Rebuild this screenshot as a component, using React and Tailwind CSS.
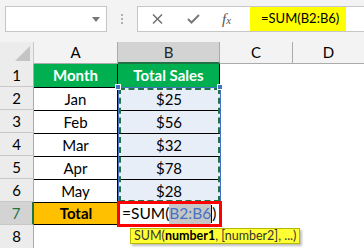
import React from "react";

const rows = [
  ["Jan", "$25"],
  ["Feb", "$56"],
  ["Mar", "$32"],
  ["Apr", "$78"],
  ["May", "$28"],
];

export default function App() {
  return (
    <div className="relative w-[364px] h-[249px] overflow-hidden bg-white" style={{ fontFamily: "Lato, 'Liberation Sans', sans-serif" }}>
      {/* formula bar area */}
      <div className="h-[42px] bg-[#f3f3f3] flex items-start pt-[6px] pl-[5px]">
        <div className="w-[102px] h-[26px] bg-white border border-[#c6c6c6] flex items-center justify-end pr-[6px]">
          <svg width="8" height="5" viewBox="0 0 8 5"><path d="M0 0H8L4 5Z" fill="#777" /></svg>
        </div>
        <div className="w-[30px] h-[26px] flex flex-col items-center justify-center gap-[2px]">
          <div className="w-[2px] h-[2px] bg-[#b0b0b0]" />
          <div className="w-[2px] h-[2px] bg-[#b0b0b0]" />
          <div className="w-[2px] h-[2px] bg-[#b0b0b0]" />
        </div>
        <div className="flex-1 h-[26px] bg-white border border-[#c6c6c6] border-r-0 flex items-stretch">
          <div className="w-[112px] flex items-center">
            <svg className="ml-[14px]" width="11" height="10" viewBox="0 0 11 10"><path d="M1 0.5L10 9.5M10 0.5L1 9.5" stroke="#6a6a6a" strokeWidth="1.4" /></svg>
            <svg className="ml-[24px]" width="13" height="10" viewBox="0 0 13 10"><path d="M1 5L4.5 8.5L12 1" stroke="#7a7a7a" strokeWidth="2" fill="none" /></svg>
            <span className="ml-[22px] text-[15px] italic text-[#555]" style={{ fontFamily: "'Liberation Serif', serif" }}>f<span className="text-[11px]">x</span></span>
          </div>
          <div className="w-[96px] bg-[#ffff00] flex items-center pl-[11px] text-[13px] text-black">=SUM(B2:B6)</div>
        </div>
      </div>

      {/* grid */}
      <div className="grid grid-cols-[34px_84px_102px_73px_71px] grid-rows-[22px_repeat(8,23px)] text-[15px]">
        {/* header row */}
        <div className="relative bg-[#ececec] border-r border-[#c8c8c8]">
          <svg className="absolute right-[3px] bottom-[3px]" width="15" height="15" viewBox="0 0 15 15"><path d="M15 0V15H0Z" fill="#c4c4c4" /></svg>
        </div>
        <div className="bg-[#f3f3f3] border-r border-[#ababab] border-b border-b-[#ababab] flex items-center justify-center text-black">A</div>
        <div className="bg-[#d3d3d3] border-r border-[#ababab] border-b-2 border-b-[#217346] flex items-center justify-center text-[#262626]">B</div>
        <div className="bg-[#f3f3f3] border-r border-[#ababab] border-b border-b-[#ababab] flex items-center justify-center text-black">C</div>
        <div className="bg-[#f3f3f3] border-b border-b-[#ababab] flex items-center justify-center text-black">D</div>

        {/* row 1 */}
        <div className="bg-[#ececec] border-r border-[#ababab] border-b border-b-[#c8c8c8] flex items-center justify-center">1</div>
        <div className="bg-[#00b050] border-r border-black flex items-center justify-center font-bold text-white">Month</div>
        <div className="bg-[#00b050] border-r border-black flex items-center justify-center font-bold text-white">Total Sales</div>
        <div />
        <div />

        {rows.map(([m, v], i) => (
          <React.Fragment key={m}>
            <div className="bg-[#ececec] border-r border-[#ababab] border-b border-b-[#c8c8c8] flex items-center justify-center">{i + 2}</div>
            <div className="border-t border-black border-r flex items-center justify-center text-black">{m}</div>
            <div className="bg-[#e8eef8] border-t border-black flex items-center justify-center text-black">{v}</div>
            <div />
            <div />
          </React.Fragment>
        ))}

        {/* row 7 */}
        <div className="bg-[#d3d3d3] border-r-2 border-[#217346] border-b border-b-[#c8c8c8] flex items-center justify-center text-[#217346]">7</div>
        <div className="bg-[#ffc000] border-t border-b border-black flex items-center justify-center font-bold text-black">Total</div>
        <div />
        <div />
        <div />

        {/* row 8 */}
        <div className="bg-[#ececec] border-r border-[#ababab] flex items-center justify-center">8</div>
        <div />
        <div />
        <div />
        <div />
      </div>

      {/* selection of B2:B6 */}
      <div className="absolute left-[118px] top-[87px] w-[103px] h-[116px] border border-[#4472c4]">
        <div className="absolute inset-0 border-2 border-dashed border-[#217346]" />
      </div>
      <div className="absolute left-[115px] top-[84px] w-[6px] h-[6px] bg-[#4472c4] border border-white" />
      <div className="absolute left-[217px] top-[84px] w-[6px] h-[6px] bg-[#4472c4] border border-white" />

      {/* active cell B7 */}
      <div className="absolute left-[117px] top-[201px] w-[105px] h-[26px] border-[3px] border-[#ff0000] bg-white flex items-center pl-[2px] text-[15.5px] text-black leading-none">
        <span>=SUM(</span>
        <span className="bg-[#c6c6c6] text-[#4472c4] py-[2px]">B2:B6</span>
        <span className="w-px h-[18px] bg-black" />
        <span>)</span>
      </div>

      {/* tooltip */}
      <div className="absolute left-[130px] top-[228px] h-[16px] px-[3px] bg-[#ffff33] border border-[#b8b800] shadow-[2px_2px_2px_rgba(0,0,0,0.25)] flex items-center text-[12.5px] text-[#333] whitespace-nowrap">
        SUM(<b className="text-black">number1</b>, [number2], ...)
      </div>
    </div>
  );
}
